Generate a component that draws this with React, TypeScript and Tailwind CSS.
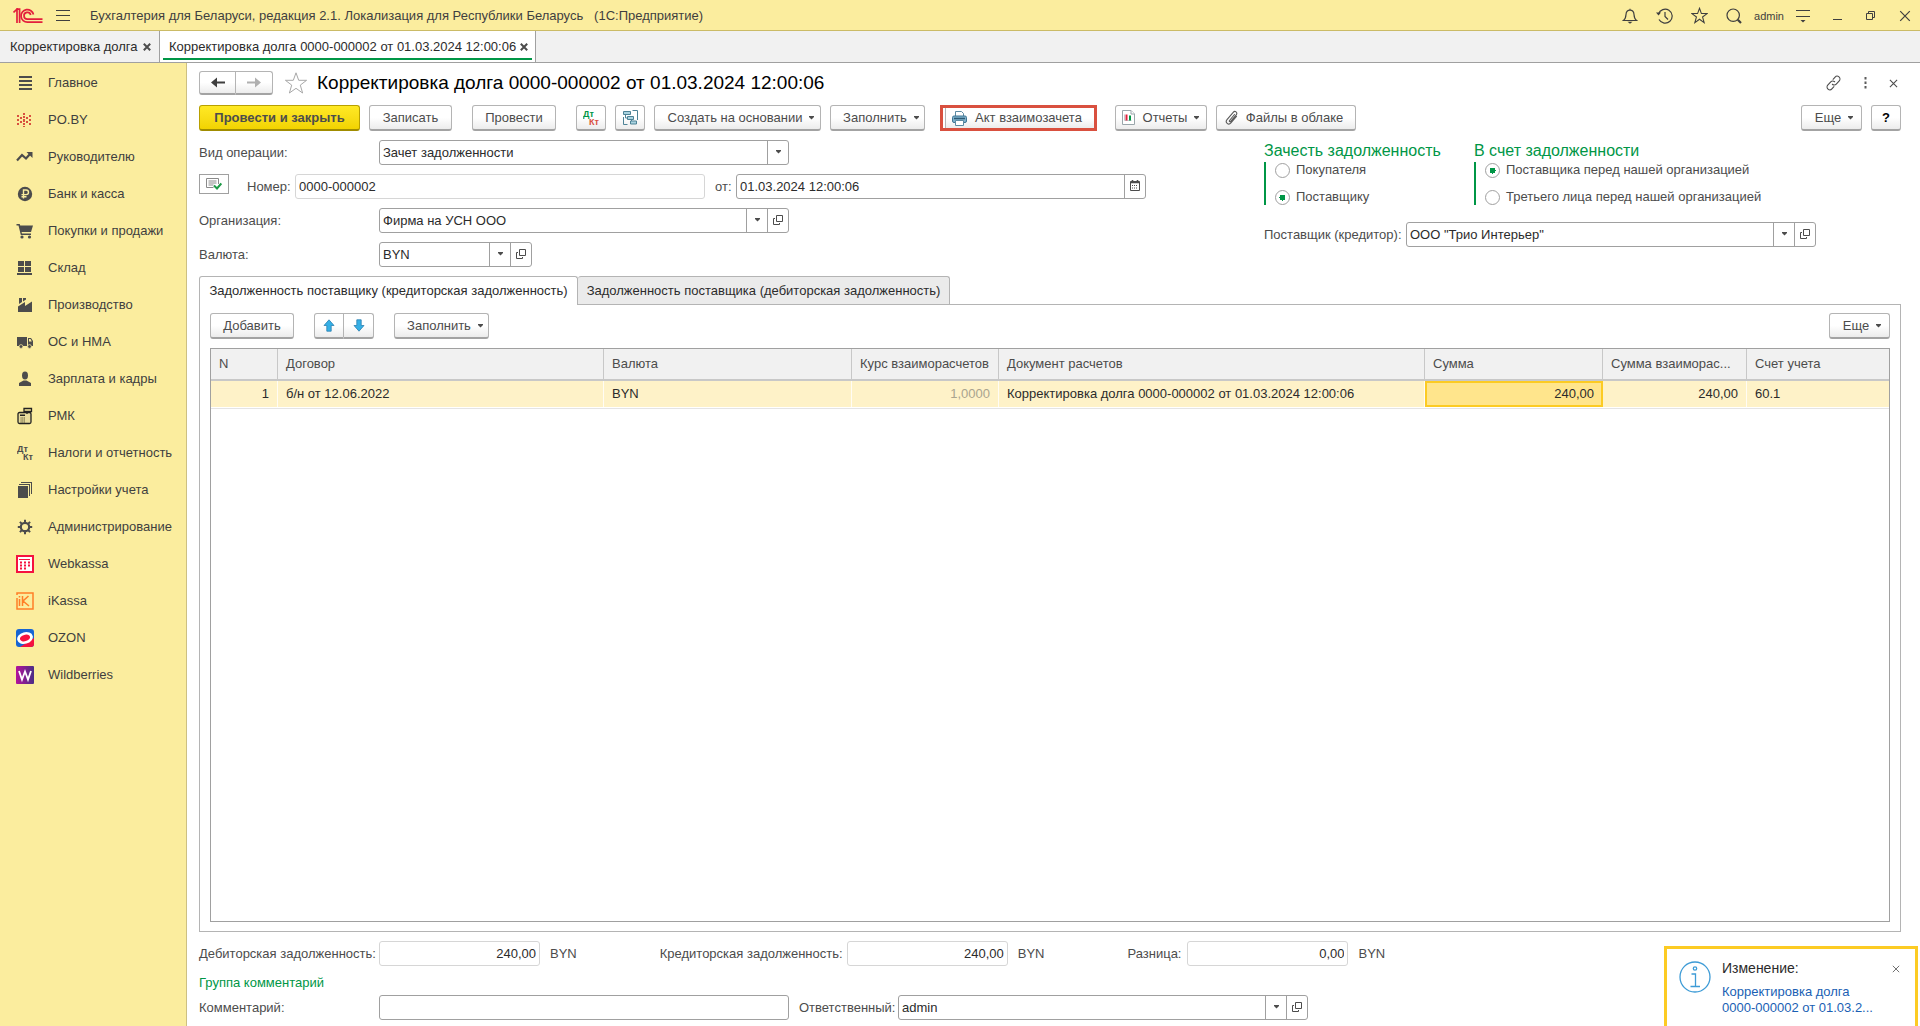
import { clsx, type ClassValue } from "clsx";
import React from "react";
import { twMerge } from "tailwind-merge";

function cn(...values: ClassValue[]) {
  return twMerge(clsx(values));
}

// Icons
function Caret({ className }: { className?: string }) {
  return (
    <svg className={cn("shrink-0", className)} width="7" height="4" viewBox="0 0 7 4" fill="currentColor" aria-hidden="true">
      <path d="M1 0h5v1L3.5 3.5L1 1z" />
    </svg>
  );
}

function OpenIcon() {
  return (
    <svg width="10" height="10" viewBox="0 0 10 10" fill="none" stroke="#4c4c4c" aria-hidden="true">
      <path d="M3.5 0.5h6v6h-6zM2 3.5H0.5v6h6V8" />
    </svg>
  );
}

function LogoIcon() {
  return (
    <svg width="30" height="16" viewBox="0 0 30 16" fill="none" stroke="#e31e3c" strokeWidth="1.7" aria-hidden="true">
      <path d="M0.5 4.5L4 1.2V15M3 1.2h3.6V15" />
      <path d="M20.5 6.5A6.3 6.3 0 1 0 14.5 14.2H29.5" />
      <path d="M17.7 7A3.4 3.4 0 1 0 14.5 11.2H29.5" />
    </svg>
  );
}

function BurgerIcon() {
  return (
    <svg width="14" height="13" viewBox="0 0 14 13" stroke="#3f3f3f" aria-hidden="true">
      <path d="M0 1.5h14M0 6.5h14M0 11.5h14" />
    </svg>
  );
}

function BellIcon() {
  return (
    <svg width="16" height="16" viewBox="0 0 16 16" fill="none" stroke="#3f3f3f" strokeWidth="1.2" aria-hidden="true">
      <path d="M8 0.8V2M1.5 12.5C3.5 11 3.8 9.5 4 6.5C4.2 3.5 6 2.2 8 2.2S11.8 3.5 12 6.5C12.2 9.5 12.5 11 14.5 12.5Z" />
      <path d="M5.5 13.8h5L8 15.8z" fill="#3f3f3f" stroke="none" />
    </svg>
  );
}

function HistoryIcon() {
  return (
    <svg width="17" height="16" viewBox="0 0 17 16" fill="none" stroke="#3f3f3f" strokeWidth="1.2" aria-hidden="true">
      <path d="M2.5 6A7 7 0 1 1 3 11.500M9 4v4.500l3 3" />
      <path d="M0 4.500h5L2.500 7.500z" fill="#3f3f3f" stroke="none" />
    </svg>
  );
}

function StarIcon({ size, color }: { size: number; color: string }) {
  return (
    <svg width={size} height={size} viewBox="0 0 24 24" fill="none" stroke={color} strokeWidth={size > 20 ? 1 : 1.5} aria-hidden="true">
      <path d="M12 1.8L14.7 9.3H22.6L16.3 14.1L18.6 22L12 17.3L5.4 22L7.7 14.1L1.4 9.3H9.3Z" />
    </svg>
  );
}

function SearchIcon() {
  return (
    <svg width="16" height="16" viewBox="0 0 16 16" fill="none" stroke="#3f3f3f" strokeWidth="1.2" aria-hidden="true">
      <circle cx="7.2" cy="7.2" r="6.2" />
      <path d="M11.8 11.8L15 15" strokeWidth="2.2" />
    </svg>
  );
}

function SettingsIcon() {
  return (
    <svg width="14" height="14" viewBox="0 0 14 14" stroke="#3f3f3f" aria-hidden="true">
      <path d="M0 1.5h14M0 7.5h14" />
      <path d="M4.500 11h5L7 13.500z" fill="#3f3f3f" stroke="none" />
    </svg>
  );
}

function CrossIcon({ size, width, color }: { size: number; width: number; color: string }) {
  return (
    <svg width={size} height={size} viewBox="0 0 10 10" stroke={color} strokeWidth={width} aria-hidden="true">
      <path d="M1 1L9 9M9 1L1 9" />
    </svg>
  );
}

function ArrowIcon({ color, flip }: { color: string; flip?: boolean }) {
  return (
    <svg className={cn({ "rotate-180": flip })} width="14" height="11" viewBox="0 0 14 11" fill={color} aria-hidden="true">
      <path d="M0 5.5L6 0.5V4.5H14V6.5H6V10.5z" />
    </svg>
  );
}

function MoveIcon({ flip }: { flip?: boolean }) {
  return (
    <svg className={cn({ "rotate-180": flip })} width="12" height="13" viewBox="0 0 12 13" fill="#35b0e6" stroke="#2b7fb0" strokeWidth="0.8" aria-hidden="true">
      <path d="M6 0.8L11 6.5H8.2V12.2H3.8V6.5H1z" />
    </svg>
  );
}

function LinkIcon() {
  return (
    <svg width="17" height="16" viewBox="-8.5 -8 17 16" fill="none" stroke="#4c4c4c" strokeWidth="1.1" strokeLinecap="round" aria-hidden="true">
      <g transform="rotate(-48)">
        <path d="M-2.500 2.800H-5.500A2.700 2.800 0 0 1 -5.500 -2.800H-1A2.700 2.700 0 0 1 1.700 0" />
        <path d="M2.500 -2.800H5.500A2.700 2.800 0 0 1 5.500 2.800H1A2.700 2.700 0 0 1 -1.700 0" />
      </g>
    </svg>
  );
}

function StructureIcon() {
  return (
    <svg width="15" height="15" viewBox="0 0 15 15" fill="#a9d3e0" stroke="#4d8296" aria-hidden="true">
      <path d="M0.5 1.5h7v3h-7zM4.5 6.5h6v3h-6zM7.500 11h6v3h-6z" />
      <path d="M9.500 0.500h5v9.500M2.500 4.500v3.500h2M0.500 7v7.500h4M8.500 9.500v1.500" fill="none" />
    </svg>
  );
}

function PrinterIcon() {
  return (
    <svg width="15" height="15" viewBox="0 0 15 15" aria-hidden="true">
      <path d="M3.5 5.500V0.500h6l2 2V5.500" fill="#fff" stroke="#5d8ba3" />
      <rect x="0.5" y="5" width="14" height="6.500" rx="1.500" fill="#7fb2cc" stroke="#3f7594" />
      <path d="M2 7.500h11" stroke="#2d5a75" strokeWidth="1.500" />
      <path d="M3.500 9.500h8v5h-8z" fill="#fff" stroke="#5d8ba3" />
    </svg>
  );
}

function ReportIcon() {
  return (
    <svg width="13" height="15" viewBox="0 0 13 15" fill="#fff" aria-hidden="true">
      <path d="M0.5 0.5h8.500l3.500 3.500v10.500h-12z" stroke="#9aa6ab" />
      <path d="M9 0.500V4h3.500" stroke="#9aa6ab" />
      <path d="M2.500 4.500v6h7" stroke="#c3cbcf" fill="none" />
      <path d="M4.500 4.500v6" stroke="#e0213d" strokeWidth="2" />
      <path d="M8 5.500v5" stroke="#009646" strokeWidth="2" />
    </svg>
  );
}

function ClipIcon() {
  return (
    <svg width="13" height="15" viewBox="0 0 13 15" fill="none" stroke="#5a5a5a" strokeWidth="1.1" strokeLinecap="round" aria-hidden="true">
      <path d="M9.5 4.500L4.500 10.500C3.900 11.300 5 12.200 5.700 11.400L11.200 4.900C13 2.600 10 0.200 8.200 2.300L2 9.600C-0.300 12.500 3.500 15.700 5.900 12.900L11.500 6.300" />
    </svg>
  );
}

function PostedIcon() {
  return (
    <svg width="16" height="12" viewBox="0 0 16 12" fill="none" aria-hidden="true">
      <path d="M12.500 6V0.500h-12v9h7" stroke="#8a8a8a" />
      <path d="M2.500 3h8M2.500 5h8M2.500 7h5" stroke="#8a8a8a" />
      <path d="M8 7.500l3 3L15.300 5.500" stroke="#1d9a46" strokeWidth="2" />
    </svg>
  );
}

function CalendarIcon() {
  return (
    <svg width="10" height="11" viewBox="0 0 10 11" fill="none" stroke="#4c4c4c" aria-hidden="true">
      <path d="M0.5 1.500h9v9h-9z" />
      <path d="M0.500 2.500h9M2.500 0v2M7.500 0v2" strokeWidth="1.600" />
      <path d="M2 5.500h6M2 8h6" strokeDasharray="1 1" />
    </svg>
  );
}

function InfoIcon() {
  return (
    <svg width="32" height="32" viewBox="0 0 32 32" fill="none" stroke="#3d9bd6" strokeWidth="1.3" aria-hidden="true">
      <circle cx="16" cy="16" r="15" />
      <circle cx="16" cy="7.5" r="1.7" />
      <path d="M12.500 13h4v12.500M11.500 25.500h9.500" />
    </svg>
  );
}

function DtKtIcon({ top, bottom }: { top: string; bottom: string }) {
  return (
    <svg width="17" height="16" viewBox="0 0 17 16" fontFamily="Liberation Sans" fontSize="9" fontWeight="bold" aria-hidden="true">
      <text x="0" y="7" fill={top}>
        Дт
      </text>
      <text x="6" y="15" fill={bottom}>
        Кт
      </text>
    </svg>
  );
}

const dark = "#4c4c4c";

function Glyph({ children }: React.PropsWithChildren) {
  return (
    <svg width="18" height="18" viewBox="0 0 18 18" fill={dark} aria-hidden="true">
      {children}
    </svg>
  );
}

const sections = [
  {
    name: "Главное",
    icon: (
      <Glyph>
        <path d="M3 2h13v2H3zM3 6h13v2H3zM3 10h13v2H3zM3 14h13v2H3z" />
      </Glyph>
    ),
  },
  {
    name: "PO.BY",
    icon: (
      <Glyph>
        <path
          fill="#d9503f"
          d="M7 2h2v2H7zM7 5h2v2H7zM7 8h2v3H7zM7 12h2v2H7zM7 15h2v1H7zM1 4h2v2H1zM13 4h2v2h-2zM1 12h2v2H1zM13 12h2v2h-2zM4 6h2v2H4zM10 6h2v2h-2zM4 10h2v2H4zM10 10h2v2h-2zM1 8h2v2H1zM13 8h2v2h-2z"
        />
      </Glyph>
    ),
  },
  {
    name: "Руководителю",
    icon: (
      <Glyph>
        <path d="M1 12.500L6 7l4 3.500L14 6" fill="none" stroke={dark} strokeWidth="2.200" />
        <path d="M10.500 4H16.500V10z" />
      </Glyph>
    ),
  },
  {
    name: "Банк и касса",
    icon: (
      <Glyph>
        <circle cx="9" cy="9" r="7.200" />
        <path d="M7.500 13.500V5h2.700a2.300 2.300 0 0 1 0 4.600H5.500M5.500 11.700h5" fill="none" stroke="#fbed9e" strokeWidth="1.400" />
      </Glyph>
    ),
  },
  {
    name: "Покупки и продажи",
    icon: (
      <Glyph>
        <path d="M0.500 2h3.200l0.500 1.500H17L15 10H5.500l0.500 1.500h9v1.500H4.800L2.500 3.500h-2z" />
        <circle cx="6" cy="15" r="1.600" />
        <circle cx="13.500" cy="15" r="1.600" />
      </Glyph>
    ),
  },
  {
    name: "Склад",
    icon: (
      <Glyph>
        <path d="M2 2h6v5H2zM9 2h6v5H9zM2 8h6v5H2zM9 8h6v5H9zM1 14h15v2H1z" />
      </Glyph>
    ),
  },
  {
    name: "Производство",
    icon: (
      <Glyph>
        <path d="M2 16V10.500L9 6v4L16 5.500v10.500zM3 2h3v4L3 8zM7 2h3v1.500L7 5.500z" />
      </Glyph>
    ),
  },
  {
    name: "ОС и НМА",
    icon: (
      <Glyph>
        <path d="M1 4h10v9H1z" />
        <path d="M12 5h3l2 3v5h-5zM13 6v2.500h2.800L14.500 6z" fillRule="evenodd" />
        <circle cx="5" cy="13.500" r="1.900" stroke="#fbed9e" strokeWidth="0.700" />
        <circle cx="13.500" cy="13.500" r="1.900" stroke="#fbed9e" strokeWidth="0.700" />
      </Glyph>
    ),
  },
  {
    name: "Зарплата и кадры",
    icon: (
      <Glyph>
        <ellipse cx="9" cy="5.500" rx="3" ry="4" />
        <path d="M3 16v-3l4.500-2.500h3L15 13v3z" />
      </Glyph>
    ),
  },
  {
    name: "РМК",
    icon: (
      <Glyph>
        <rect x="2" y="5.500" width="13" height="11" rx="1.500" fill="#e8dc9c" stroke="#222" strokeWidth="1.300" />
        <path d="M8 1.500h7.500v3H8zM11 4.500V7" fill="#fbed9e" stroke="#222" strokeWidth="1.300" />
        <path d="M4 7.500h5v1.500H4z" fill="#222" />
        <path d="M4.500 11h4.500M4.500 13h4.500M4.500 15h4.500" stroke="#5a5338" strokeWidth="1" strokeDasharray="1.200 0.500" />
      </Glyph>
    ),
  },
  { name: "Налоги и отчетность", icon: <DtKtIcon top={dark} bottom={dark} /> },
  {
    name: "Настройки учета",
    icon: (
      <Glyph>
        <path d="M2 5h10v12H2zM3 3h11v12h-1V4H3zM5 1h11v12h-1V2H5z" />
      </Glyph>
    ),
  },
  {
    name: "Администрирование",
    icon: (
      <Glyph>
        <circle cx="9" cy="9" r="4.200" fill="none" stroke={dark} strokeWidth="2.200" />
        <path
          d="M9 1.800v3M9 13.200v3M1.800 9h3M13.200 9h3M3.900 3.900L6 6M12 12l2.100 2.100M14.100 3.900L12 6M6 12l-2.100 2.100"
          stroke={dark}
          strokeWidth="2"
        />
      </Glyph>
    ),
  },
  {
    name: "Webkassa",
    icon: (
      <Glyph>
        <rect x="1" y="1" width="16" height="16" fill="#fff" stroke="#f5123f" strokeWidth="2" />
        <path d="M3 4.500h11" stroke="#f5123f" />
        <path d="M4 7.500h10M4 10.500h10M4 13.500h6" stroke="#f5123f" strokeWidth="2" strokeDasharray="2 2" />
      </Glyph>
    ),
  },
  {
    name: "iKassa",
    icon: (
      <Glyph>
        <path d="M1 3V1h16v16H1V6M3.500 7v7M3.500 4v1.500M6.500 4v10M12.500 4L7 9l6 5" fill="none" stroke="#ff7f27" strokeWidth="1.500" />
      </Glyph>
    ),
  },
  {
    name: "OZON",
    icon: (
      <Glyph>
        <rect width="18" height="18" rx="3" fill="#1665d3" />
        <path d="M18 9v6a3 3 0 0 1-3 3H4z" fill="#f5123f" />
        <ellipse cx="9" cy="9" rx="8" ry="5.800" transform="rotate(-15 9 9)" fill="#fff" />
        <ellipse cx="9" cy="9" rx="5.200" ry="3.200" transform="rotate(-15 9 9)" fill="#f5123f" />
      </Glyph>
    ),
  },
  {
    name: "Wildberries",
    icon: (
      <Glyph>
        <defs>
          <linearGradient id="wb">
            <stop offset="0" stopColor="#b3129b" />
            <stop offset="1" stopColor="#4b2f86" />
          </linearGradient>
        </defs>
        <rect width="18" height="18" rx="1" fill="url(#wb)" />
        <path d="M3 5l3 8.500L9 5.500l3 8L15 5" fill="none" stroke="#fff" strokeWidth="1.800" />
      </Glyph>
    ),
  },
];

// Controls
function Button(props: React.ComponentPropsWithoutRef<"button">) {
  const { children, className, ...rest } = props;
  return (
    <button
      type="button"
      className={cn(
        "flex h-[26px] shrink-0 items-center justify-center rounded-[3px] border border-b-2 border-[#b4b4b4] border-b-[#a3a3a3] bg-linear-to-b from-white from-50% to-[#ececec] whitespace-nowrap text-[#4c4c4c]",
        className,
      )}
      {...rest}
    >
      {children}
    </button>
  );
}

const frame = "flex h-[25px] overflow-hidden rounded-[3px] border border-[#a0a0a0] bg-white";

interface IFieldProps {
  id: string;
  value: string;
  className?: string;
}

function Combo({ id, value, className, open }: IFieldProps & { open?: boolean }) {
  return (
    <div className={cn(frame, className)}>
      <div className="relative flex-1">
        <select id={id} className="h-full w-full appearance-none pl-[3px] text-[#2b2b2b]">
          <option>{value}</option>
        </select>
        <span className="pointer-events-none absolute inset-y-0 right-0 flex w-[21px] items-center justify-center border-l border-[#a0a0a0] pb-[2px]">
          <Caret />
        </span>
      </div>
      {open && (
        <button type="button" aria-label="Открыть" className="flex w-[21px] items-center justify-center border-l border-[#a0a0a0] pb-[2px]">
          <OpenIcon />
        </button>
      )}
    </div>
  );
}

function ReadOnly({ id, value, className }: IFieldProps) {
  return (
    <input
      id={id}
      readOnly
      value={value}
      className={cn("h-[25px] rounded-[3px] border border-[#d6d6d6] bg-white px-[3px] text-[#2b2b2b]", className)}
    />
  );
}

interface IChoiceProps {
  title: string;
  name: string;
  options: string[];
  selected: number;
}

function Choice({ title, name, options, selected }: IChoiceProps) {
  return (
    <fieldset>
      <legend className="text-base leading-[22px] text-[#009646]">{title}</legend>
      <div className="flex h-[43px] flex-col justify-between border-l-2 border-[#009646] pl-[9px]">
        {options.map((option, i) => (
          <label key={option} className="flex h-4 items-center gap-[6px] whitespace-nowrap">
            <input
              type="radio"
              name={name}
              defaultChecked={i === selected}
              className="size-[15px] appearance-none rounded-full border border-[#a0a0a0] bg-white checked:bg-[radial-gradient(circle,#009646_0_3px,#fff_3px)]"
            />
            {option}
          </label>
        ))}
      </div>
    </fieldset>
  );
}

function Total({ id, label, value, labelClass }: { id: string; label: string; value: string; labelClass: string }) {
  return (
    <div className="flex items-center">
      <label htmlFor={id} className={cn("whitespace-nowrap", labelClass)}>
        {label}
      </label>
      <ReadOnly id={id} value={value} className="w-[161px] text-right" />
      <span className="ml-[10px]">BYN</span>
    </div>
  );
}

// Page sections
function TopBar() {
  return (
    <header className="flex h-[31px] shrink-0 items-center border-b border-[#cbbb66] bg-[#fbed9e] pt-px pr-[9px] pl-[13px] text-[#3f3f3f]">
      <LogoIcon />
      <button type="button" aria-label="Меню" className="mr-[20px] ml-[13px]">
        <BurgerIcon />
      </button>
      <span className="flex-1 whitespace-pre">
        Бухгалтерия для Беларуси, редакция 2.1. Локализация для Республики Беларусь{"   "}(1С:Предприятие)
      </span>
      <div className="flex items-center gap-[18px]">
        <button type="button" aria-label="Уведомления">
          <BellIcon />
        </button>
        <button type="button" aria-label="История">
          <HistoryIcon />
        </button>
        <button type="button" aria-label="Избранное">
          <StarIcon size={17} color="#3f3f3f" />
        </button>
        <button type="button" aria-label="Поиск">
          <SearchIcon />
        </button>
      </div>
      <span className="mr-3 ml-3 text-[11px]">admin</span>
      <button type="button" aria-label="Настройки">
        <SettingsIcon />
      </button>
      <div className="ml-[23px] flex items-center gap-6">
        <button type="button" aria-label="Свернуть">
          <svg width="9" height="9" stroke="#3f3f3f">
            <path d="M0 8.5h9" />
          </svg>
        </button>
        <button type="button" aria-label="Развернуть">
          <svg width="9" height="9" fill="none" stroke="#3f3f3f">
            <path d="M0.5 2.5h6v6h-6zM2.5 2.5V0.5h6v6h-2" />
          </svg>
        </button>
        <button type="button" aria-label="Закрыть">
          <CrossIcon size={12} width={1} color="#3f3f3f" />
        </button>
      </div>
    </header>
  );
}

function WindowTabs() {
  return (
    <nav className="flex h-8 shrink-0 border-b border-[#a0a0a0] bg-[#f1f1f1] text-[#2b2b2b]">
      <div className="flex w-[160px] items-center justify-between border-r border-[#a0a0a0] pr-2 pl-[10px]">
        <a href="#list" className="whitespace-nowrap">Корректировка долга</a>
        <button type="button" aria-label="Закрыть вкладку">
          <CrossIcon size={8} width={2.5} color="#4c4c4c" />
        </button>
      </div>
      <div className="flex w-[376px] border-r border-[#a0a0a0] bg-white px-[3px] pb-[2px]">
        <div className="flex flex-1 items-center justify-between border-b-2 border-[#009646] pt-1 pr-1 pl-[6px]">
          <a href="#doc" className="whitespace-nowrap">Корректировка долга 0000-000002 от 01.03.2024 12:00:06</a>
          <button type="button" aria-label="Закрыть вкладку">
            <CrossIcon size={8} width={2.5} color="#4c4c4c" />
          </button>
        </div>
      </div>
    </nav>
  );
}

function Sidebar() {
  return (
    <aside className="w-[187px] shrink-0 border-r border-[#cdc082] bg-[#fbed9e]">
      <ul>
        {sections.map(({ name, icon }) => (
          <li key={name}>
            <a href="#section" className="flex h-[37px] items-center gap-[14px] pt-[2px] pl-4 whitespace-nowrap text-[#3f3f3f]">
              <span className="flex w-[18px] justify-center">{icon}</span>
              {name}
            </a>
          </li>
        ))}
      </ul>
    </aside>
  );
}

function TitleRow() {
  return (
    <div className="flex h-6 items-center">
      <div className="flex">
        <Button aria-label="Назад" className="h-6 w-[37px] rounded-r-none">
          <ArrowIcon color="#3f3f3f" />
        </Button>
        <Button aria-label="Вперед" className="h-6 w-[37px] rounded-l-none border-l-0">
          <ArrowIcon color="#b0b0b0" flip />
        </Button>
      </div>
      <button type="button" aria-label="В избранное" className="mr-[9px] ml-[11px]">
        <StarIcon size={24} color="#a8a8a8" />
      </button>
      <h1 className="flex-1 text-[19px] leading-6 text-black">Корректировка долга 0000-000002 от 01.03.2024 12:00:06</h1>
      <div className="flex items-center gap-[22px] pr-[3px]">
        <button type="button" aria-label="Ссылка">
          <LinkIcon />
        </button>
        <button type="button" aria-label="Действия">
          <svg width="3" height="12" fill="#5c5c5c">
            <path d="M0.5 0h2v2.500h-2zM0.5 4.500h2v2.500h-2zM0.5 9h2v2.500h-2z" />
          </svg>
        </button>
        <button type="button" aria-label="Закрыть">
          <CrossIcon size={9} width={1.2} color="#4c4c4c" />
        </button>
      </div>
    </div>
  );
}

function CommandBar() {
  return (
    <div className="mt-[10px] flex items-center">
      <Button className="w-[161px] border-[#b8a000] border-b-[#a08c00] from-[#ffe924] from-0% to-[#f2d300] font-bold">
        Провести и закрыть
      </Button>
      <Button className="ml-[9px] w-[83px]">Записать</Button>
      <Button className="ml-5 w-[84px]">Провести</Button>
      <Button className="ml-5 w-[30px]" aria-label="Проводки">
        <DtKtIcon top="#009646" bottom="#d9503f" />
      </Button>
      <Button className="ml-[9px] w-[30px]" aria-label="Структура">
        <StructureIcon />
      </Button>
      <Button className="ml-[9px] w-[167px] gap-[6px] pl-2">
        Создать на основании <Caret />
      </Button>
      <Button className="ml-[9px] w-[95px] gap-[6px] pl-2">
        Заполнить <Caret />
      </Button>
      <div className="ml-[15px] border-[3px] border-[#d9503f] pl-[2px]">
        <Button className="h-5 w-[149px] gap-2 rounded-none border-y-0 border-r-0 pr-[6px]">
          <PrinterIcon />
          Акт взаимозачета
        </Button>
      </div>
      <Button className="ml-[18px] w-[92px] gap-2">
        <ReportIcon />
        <span className="flex items-center gap-[6px]">
          Отчеты <Caret />
        </span>
      </Button>
      <Button className="ml-[9px] w-[140px] gap-2 pr-1">
        <ClipIcon />
        Файлы в облаке
      </Button>
      <Button className="ml-auto w-[61px] gap-[6px] pl-[6px]">
        Еще <Caret />
      </Button>
      <Button className="ml-[9px] w-[30px] font-bold text-black">?</Button>
    </div>
  );
}

function DocumentForm() {
  return (
    <div className="mt-[9px] flex">
      <div className="flex w-[1065px] flex-col gap-[9px]">
        <div className="flex items-center">
          <label htmlFor="operation" className="w-[180px]">Вид операции:</label>
          <Combo id="operation" value="Зачет задолженности" className="w-[410px]" />
        </div>
        <div className="flex items-center">
          <button
            type="button"
            aria-label="Документ проведен"
            className="flex h-5 w-[30px] items-center justify-center self-start border border-[#a0a0a0]"
          >
            <PostedIcon />
          </button>
          <label htmlFor="number" className="ml-[18px] w-12">Номер:</label>
          <ReadOnly id="number" value="0000-000002" className="w-[410px]" />
          <label htmlFor="date" className="ml-[10px] w-[21px]">от:</label>
          <div className={cn(frame, "w-[410px]")}>
            <input id="date" defaultValue="01.03.2024 12:00:06" className="min-w-0 flex-1 pl-[3px] text-[#2b2b2b]" />
            <button type="button" aria-label="Выбрать дату" className="flex w-[21px] items-center justify-center border-l border-[#a0a0a0] pb-[2px]">
              <CalendarIcon />
            </button>
          </div>
        </div>
        <div className="flex items-center">
          <label htmlFor="organization" className="w-[180px]">Организация:</label>
          <Combo id="organization" value="Фирма на УСН ООО" className="w-[410px]" open />
        </div>
        <div className="flex items-center">
          <label htmlFor="currency" className="w-[180px]">Валюта:</label>
          <Combo id="currency" value="BYN" className="w-[153px]" open />
        </div>
      </div>
      <div className="flex flex-col">
        <div className="flex">
          <div className="w-[210px]">
            <Choice title="Зачесть задолженность" name="offset" options={["Покупателя", "Поставщику"]} selected={1} />
          </div>
          <Choice
            title="В счет задолженности"
            name="against"
            options={["Поставщика перед нашей организацией", "Третьего лица перед нашей организацией"]}
            selected={0}
          />
        </div>
        <div className="mt-[17px] flex items-center">
          <label htmlFor="supplier" className="w-[142px] whitespace-nowrap">Поставщик (кредитор):</label>
          <Combo id="supplier" value={'ООО "Трио Интерьер"'} className="w-[410px]" open />
        </div>
      </div>
    </div>
  );
}

function Th(props: React.ComponentPropsWithoutRef<"th">) {
  const { children, className, ...rest } = props;
  return (
    <th
      scope="col"
      className={cn("border-r border-b-2 border-[#c8c8c8] px-2 text-left font-normal whitespace-nowrap last:border-r-0", className)}
      {...rest}
    >
      {children}
    </th>
  );
}

function Td(props: React.ComponentPropsWithoutRef<"td">) {
  const { children, className, ...rest } = props;
  return (
    <td className={cn("truncate border-r border-white/80 px-2 last:border-r-0", className)} {...rest}>
      {children}
    </td>
  );
}

function DebtTable() {
  return (
    <div className="mt-[9px] flex-1 border border-[#a0a0a0]">
      <table className="w-full table-fixed border-separate border-spacing-0">
        <thead>
          <tr className="h-8 bg-[#f1f1f1]">
            <Th className="w-[67px]">N</Th>
            <Th className="w-[326px]">Договор</Th>
            <Th className="w-[248px]">Валюта</Th>
            <Th className="w-[147px]">Курс взаиморасчетов</Th>
            <Th>Документ расчетов</Th>
            <Th className="w-[178px]">Сумма</Th>
            <Th className="w-[144px]">Сумма взаиморас...</Th>
            <Th className="w-[142px]">Счет учета</Th>
          </tr>
        </thead>
        <tbody>
          <tr className="h-[26px] bg-[#fef2c8] text-[#2b2b2b]">
            <Td className="text-right">1</Td>
            <Td>б/н от 12.06.2022</Td>
            <Td>BYN</Td>
            <Td className="text-right text-[#a9a48f]">1,0000</Td>
            <Td>Корректировка долга 0000-000002 от 01.03.2024 12:00:06</Td>
            <Td className="bg-[#ffe58c] text-right outline-2 -outline-offset-2 outline-[#fccb23]">240,00</Td>
            <Td className="text-right">240,00</Td>
            <Td>60.1</Td>
          </tr>
        </tbody>
      </table>
      <div className="mt-px h-px bg-[#e4e4e4]" />
    </div>
  );
}

function Notification() {
  return (
    <div className="fixed right-[2px] bottom-0 flex h-20 w-[254px] border-[3px] border-b-0 border-[#fccb23] bg-white pt-[9px] pl-[12px]">
      <div className="pt-[3px]">
        <InfoIcon />
      </div>
      <div className="ml-[11px] flex-1">
        <div className="text-sm leading-5 text-[#2b2b2b]">Изменение:</div>
        <a href="#doc" className="mt-[6px] block leading-4 text-[#1a5fb4]">
          Корректировка долга
          <br />
          0000-000002 от 01.03.2...
        </a>
      </div>
      <button type="button" aria-label="Закрыть уведомление" className="mt-[7px] mr-[15px] self-start">
        <CrossIcon size={8} width={1.2} color="#6c6c6c" />
      </button>
    </div>
  );
}

export default function App() {
  return (
    <div className="flex h-screen flex-col overflow-hidden bg-white font-['Liberation_Sans',Arial,sans-serif] text-[13px] leading-4 text-[#4c4c4c]">
      <TopBar />
      <WindowTabs />
      <div className="flex min-h-0 flex-1">
        <Sidebar />
        <main className="flex min-w-0 flex-1 flex-col pt-2 pr-[19px] pb-[6px] pl-3">
          <TitleRow />
          <CommandBar />
          <DocumentForm />
          <div role="tablist" className="mt-[9px] flex h-7 text-[#2b2b2b]">
            <button
              type="button"
              role="tab"
              aria-selected="true"
              className="z-10 -mb-px w-[379px] rounded-t-[3px] border border-b-0 border-[#b4b4b4] bg-white whitespace-nowrap"
            >
              Задолженность поставщику (кредиторская задолженность)
            </button>
            <button
              type="button"
              role="tab"
              aria-selected="false"
              className="w-[372px] rounded-t-[3px] border border-b-0 border-l-0 border-[#b4b4b4] bg-[#ebebeb] whitespace-nowrap"
            >
              Задолженность поставщика (дебиторская задолженность)
            </button>
          </div>
          <section className="flex flex-1 flex-col border border-[#b4b4b4] px-[10px] pt-2 pb-[9px]">
            <div className="flex">
              <Button className="w-[84px]">Добавить</Button>
              <Button className="ml-5 w-[30px] rounded-r-none" aria-label="Переместить вверх">
                <MoveIcon />
              </Button>
              <Button className="w-[30px] rounded-l-none border-l-0" aria-label="Переместить вниз">
                <MoveIcon flip />
              </Button>
              <Button className="ml-5 w-[95px] gap-[6px] pl-2">
                Заполнить <Caret />
              </Button>
              <Button className="ml-auto w-[61px] gap-[6px] pl-[6px]">
                Еще <Caret />
              </Button>
            </div>
            <DebtTable />
          </section>
          <div className="mt-[9px] flex">
            <Total id="debit" label="Дебиторская задолженность:" value="240,00" labelClass="w-[180px]" />
            <div className="ml-[83px]">
              <Total id="credit" label="Кредиторская задолженность:" value="240,00" labelClass="w-[187px]" />
            </div>
            <div className="ml-[83px]">
              <Total id="difference" label="Разница:" value="0,00" labelClass="w-[60px]" />
            </div>
          </div>
          <h2 className="mt-2 leading-[18px] text-[#009646]">Группа комментарий</h2>
          <div className="mt-[3px] flex items-center">
            <label htmlFor="comment" className="w-[180px]">Комментарий:</label>
            <input id="comment" className="h-[25px] w-[410px] rounded-[3px] border border-[#a0a0a0] px-[3px]" />
            <label htmlFor="responsible" className="ml-[10px] w-[99px]">Ответственный:</label>
            <Combo id="responsible" value="admin" className="w-[410px]" open />
          </div>
        </main>
      </div>
      <Notification />
    </div>
  );
}
